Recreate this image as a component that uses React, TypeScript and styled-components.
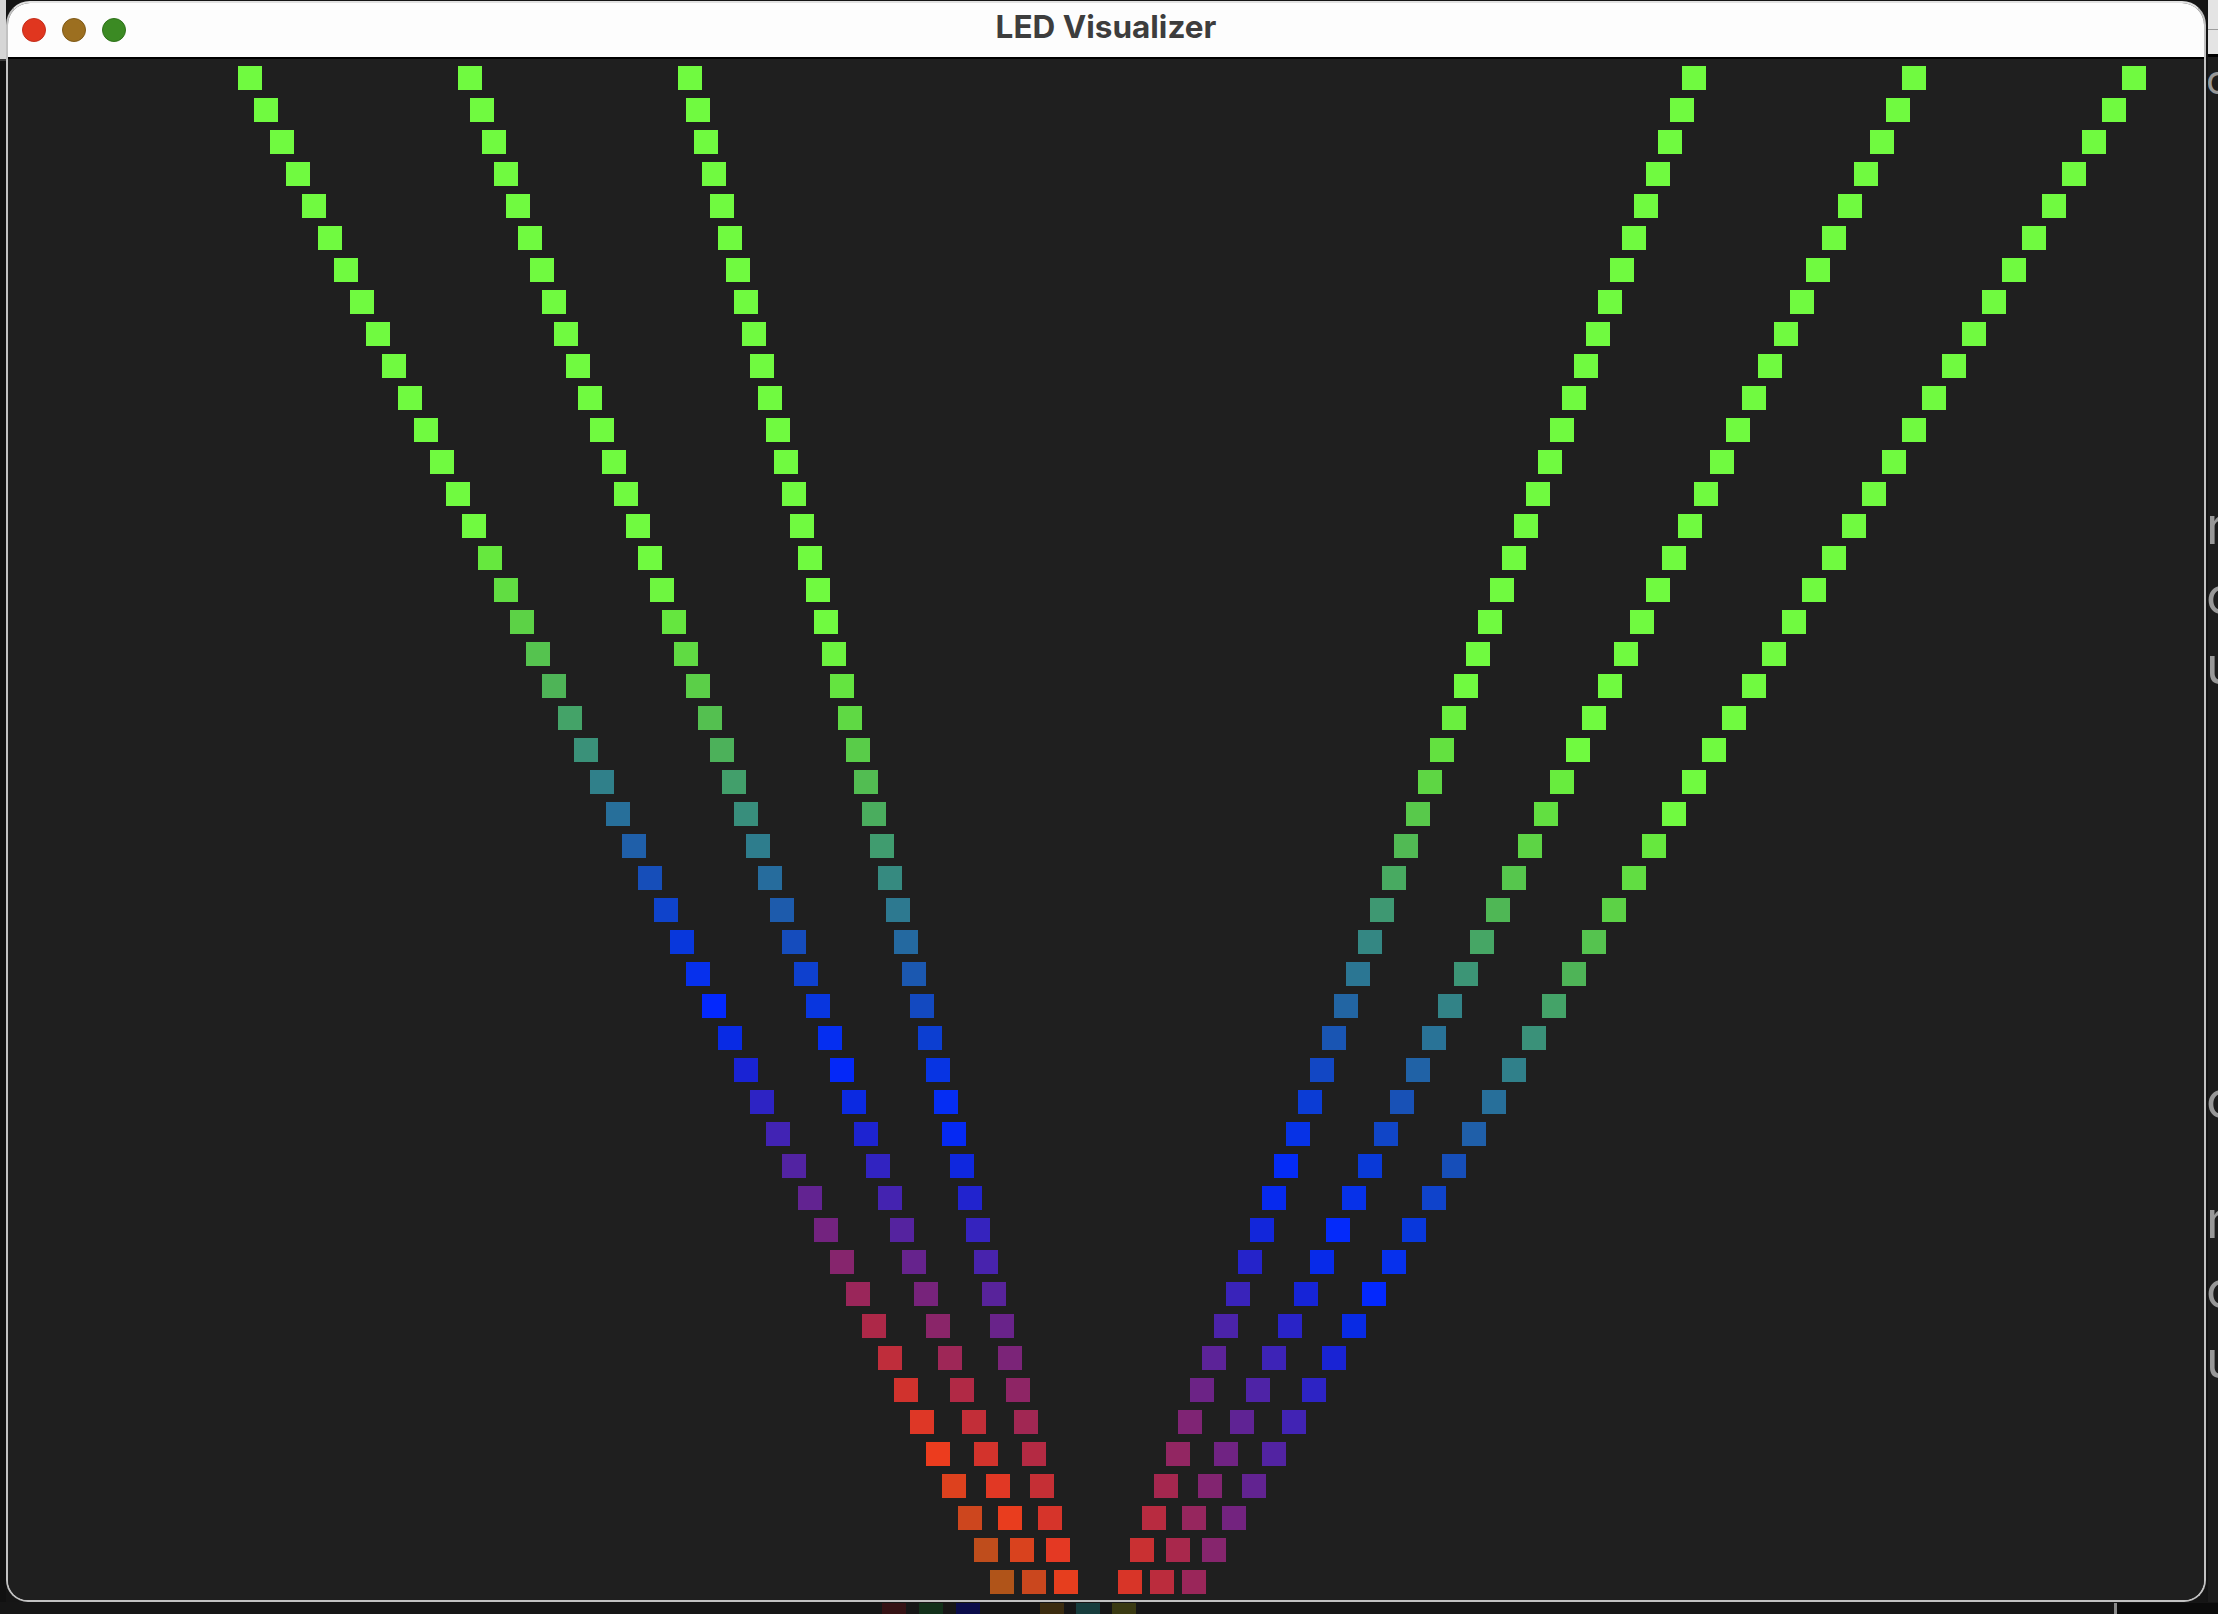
import React from 'react'
import styled, { createGlobalStyle } from 'styled-components'

const GlobalStyle = createGlobalStyle`
	html,
	body {
		margin: 0;
		padding: 0;
		background: #151515;
	}
	body {
		font-family: Inter, 'Noto Sans', sans-serif;
	}
`

// colour stops along a strand, keyed by distance (in leds) from the blue peak
const STOPS: [number, number, number, number][] = [
	[-15, 112, 250, 64],
	[-14, 102, 232, 62],
	[-12, 92, 210, 70],
	[-10, 78, 180, 87],
	[-7, 48, 128, 138],
	[-4, 22, 78, 185],
	[-2, 8, 55, 220],
	[0, 3, 40, 253],
	[1, 8, 42, 228],
	[2, 25, 35, 212],
	[4, 65, 35, 180],
	[7, 115, 35, 127],
	[10, 173, 40, 72],
	[12, 208, 50, 45],
	[14, 236, 60, 30],
	[16, 205, 70, 30],
	[18, 176, 84, 25],
]

const ledColor = (t: number) => {
	if (t <= STOPS[0][0]) return `rgb(${STOPS[0][1]},${STOPS[0][2]},${STOPS[0][3]})`
	for (let i = 1; i < STOPS.length; i++) {
		const [t1, r1, g1, b1] = STOPS[i]
		if (t <= t1) {
			const [t0, r0, g0, b0] = STOPS[i - 1]
			const k = (t - t0) / (t1 - t0)
			const mix = (a: number, b: number) => Math.round(a + (b - a) * k)
			return `rgb(${mix(r0, r1)},${mix(g0, g1)},${mix(b0, b1)})`
		}
	}
	const last = STOPS[STOPS.length - 1]
	return `rgb(${last[1]},${last[2]},${last[3]})`
}

const STRANDS = [
	{ x0: 238, dx: 16 },
	{ x0: 458, dx: 12 },
	{ x0: 678, dx: 8 },
	{ x0: 1682, dx: -12 },
	{ x0: 1902, dx: -16 },
	{ x0: 2122, dx: -20 },
]

const LED_COUNT = 48
const LED_SIZE = 24
const LED_PITCH = 32
const CANVAS_LEFT = 8
const CANVAS_TOP = 59

const Desktop = styled.div`
	width: 2218px;
	height: 1614px;
	display: flex;
	flex-direction: column;
	background: #151515;
	overflow: hidden;
`

const Stage = styled.div`
	display: flex;
	height: 1602px;
	flex: none;
`

const LeftEdge = styled.div`
	width: 6px;
	flex: none;
	display: flex;
	flex-direction: column;
	background: #111;
`

const EdgeCap = styled.div`
	height: 61px;
	box-sizing: border-box;
	background: #d6d6d6;
	border-bottom: 2px solid #3a3a3a;
`

const Window = styled.div`
	width: 2200px;
	height: 1601px;
	margin-top: 1px;
	flex: none;
	box-sizing: border-box;
	border: 2px solid #c2c2c2;
	border-top-color: #e2e2e2;
	border-radius: 24px 24px 22px 22px;
	overflow: hidden;
	display: flex;
	flex-direction: column;
	background: #1f1f1f;
`

const TitleBar = styled.div`
	height: 56px;
	flex: none;
	box-sizing: border-box;
	display: grid;
	grid-template-columns: 1fr auto 1fr;
	background: #fdfdfd;
	border-bottom: 2px solid #000;
`

const Lights = styled.div`
	display: flex;
	align-items: center;
	gap: 16px;
	padding-left: 14px;
`

const Light = styled.span<{ $fill: string; $edge: string }>`
	width: 24px;
	height: 24px;
	box-sizing: border-box;
	border-radius: 50%;
	background: ${(p) => p.$fill};
	border: 1px solid ${(p) => p.$edge};
`

const Title = styled.h1`
	margin: 0;
	align-self: start;
	font: 700 31.5px/48px Inter, 'Noto Sans', sans-serif;
	color: #3d3d3d;
	white-space: nowrap;
`

const Canvas = styled.svg`
	display: block;
	flex: none;
	background: #1f1f1f;
`

const RightEdge = styled.div`
	flex: 1;
	display: flex;
	flex-direction: column;
	overflow: hidden;
	background: #1c1c1c;
	border-left: 2px solid #141414;
`

const BehindTitle = styled.div`
	height: 57px;
	flex: none;
	box-sizing: border-box;
	background: #e4e4e4;
	border-bottom: 3px solid #000;
	background-image: linear-gradient(#e4e4e4 29px, #9c9c9c 29px, #9c9c9c 30px, #e4e4e4 30px);
`

const Glyph = styled.span<{ $gap: number; $size?: number }>`
	display: block;
	margin-top: ${(p) => p.$gap}px;
	margin-left: -2px;
	font: 400 ${(p) => p.$size ?? 52}px/70px Inter, 'Noto Sans', sans-serif;
	color: #989898;
	white-space: nowrap;
`

const BottomStrip = styled.div`
	flex: 1;
	display: flex;
	align-items: flex-start;
	padding-top: 1px;
	background: #161616;
`

const Chip = styled.span<{ $offset: number; $fill: string; $w?: number }>`
	width: ${(p) => p.$w ?? 24}px;
	height: 11px;
	flex: none;
	margin-left: ${(p) => p.$offset}px;
	background: ${(p) => p.$fill};
`

const Shade = styled.span`
	flex: 1;
	height: 11px;
	background: #0b0b0b;
`

const CHIPS = [
	{ offset: 882, fill: '#351214' },
	{ offset: 13, fill: '#12301a' },
	{ offset: 13, fill: '#0a0c4a' },
	{ offset: 60, fill: '#3b2c10' },
	{ offset: 12, fill: '#173d3d' },
	{ offset: 12, fill: '#3a3a12' },
	{ offset: 978, fill: '#8a8a8a', w: 3 },
]

const LedCanvas = () => {
	const width = 2196
	const height = 1541
	return (
		<Canvas width={width} height={height} viewBox={`0 0 ${width} ${height}`}>
			{STRANDS.map((strand, s) => {
				const bluePeak = 29 + 1.8 * s
				return Array.from({ length: LED_COUNT }, (_, i) => (
					<rect
						key={`${s}-${i}`}
						x={strand.x0 + strand.dx * i - CANVAS_LEFT}
						y={66 + LED_PITCH * i - CANVAS_TOP}
						width={LED_SIZE}
						height={LED_SIZE}
						fill={ledColor(i - bluePeak)}
					/>
				))
			})}
		</Canvas>
	)
}

export default function App() {
	return (
		<>
			<GlobalStyle />
			<Desktop>
				<Stage>
					<LeftEdge>
						<EdgeCap />
					</LeftEdge>
					<Window>
						<TitleBar>
							<Lights>
								<Light $fill="#e0361f" $edge="#c42e1c" />
								<Light $fill="#9c6f20" $edge="#7f5a18" />
								<Light $fill="#3b8a23" $edge="#2f721b" />
							</Lights>
							<Title>LED Visualizer</Title>
							<span />
						</TitleBar>
						<LedCanvas />
					</Window>
					<RightEdge>
						<BehindTitle />
						<Glyph $gap={-12} $size={40}>o</Glyph>
						<Glyph $gap={376}>r</Glyph>
						<Glyph $gap={0}>o</Glyph>
						<Glyph $gap={0}>u</Glyph>
						<Glyph $gap={364}>o</Glyph>
						<Glyph $gap={50}>r</Glyph>
						<Glyph $gap={0}>o</Glyph>
						<Glyph $gap={0}>u</Glyph>
					</RightEdge>
				</Stage>
				<BottomStrip>
					{CHIPS.map((c, i) => (
						<Chip key={i} $offset={c.offset} $fill={c.fill} $w={c.w} />
					))}
					<Shade />
				</BottomStrip>
			</Desktop>
		</>
	)
}
